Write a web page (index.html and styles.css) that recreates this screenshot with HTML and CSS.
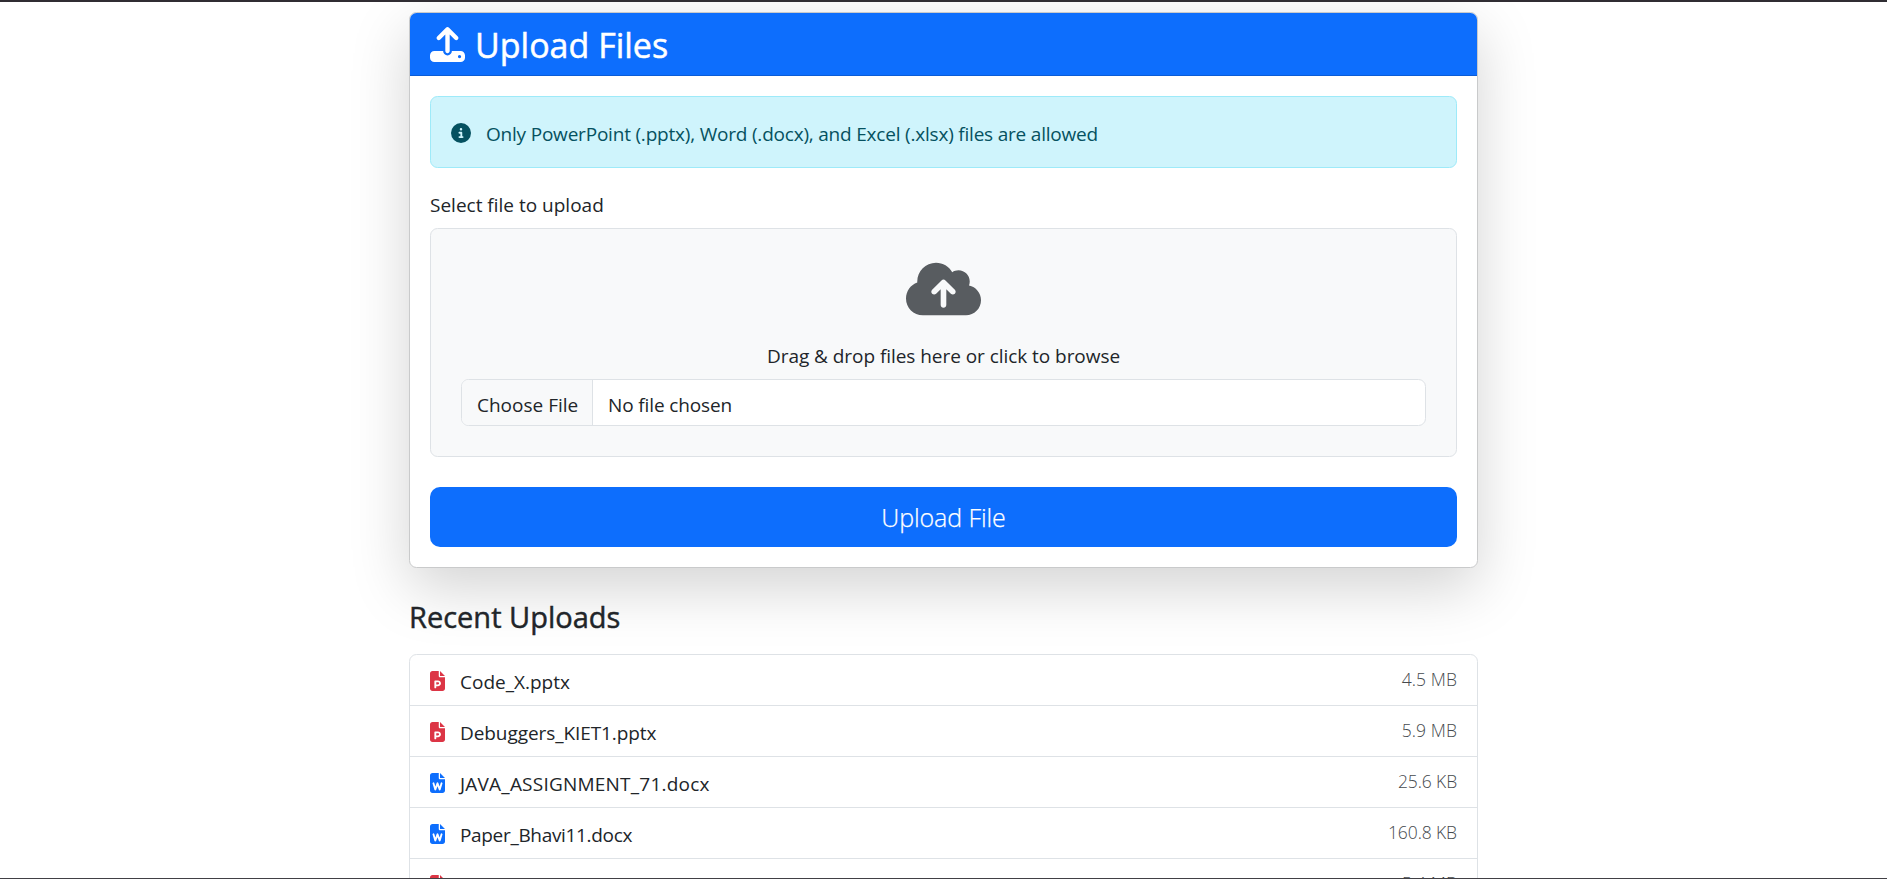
FILE: index.html
```html
<!DOCTYPE html>
<html lang="en">
<head>
<meta charset="utf-8">
<title>Upload Files</title>
<link rel="stylesheet" href="styles.css">
</head>
<body>
<svg class="defs" aria-hidden="true">
  <symbol id="ppt" viewBox="0 0 384 512"><path d="M64 0C28.7 0 0 28.7 0 64V448c0 35.3 28.7 64 64 64H320c35.3 0 64-28.7 64-64V160H256c-17.7 0-32-14.3-32-32V0H64zM256 0V128H384L256 0zM136 240h68c42 0 76 34 76 76s-34 76-76 76H160v32c0 13.3-10.7 24-24 24s-24-10.7-24-24V264c0-13.3 10.7-24 24-24zm68 104c15.5 0 28-12.5 28-28s-12.5-28-28-28H160v56h44z"/></symbol>
  <symbol id="word" viewBox="0 0 384 512"><path d="M64 0C28.7 0 0 28.7 0 64V448c0 35.3 28.7 64 64 64H320c35.3 0 64-28.7 64-64V160H256c-17.7 0-32-14.3-32-32V0H64zM256 0V128H384L256 0zM111 257.1l26.8 89.2 31.6-90.3c3.4-9.6 12.5-16.1 22.7-16.1s19.3 6.4 22.7 16.1l31.6 90.3L273 257.1c3.8-12.7 17.2-19.9 29.9-16.1s19.9 17.2 16.1 29.9l-48 160c-3 10-12 16.9-22.4 17.1s-19.8-6.2-23.2-16.1L192 336.6l-33.3 95.3c-3.4 9.8-12.8 16.3-23.2 16.1s-19.5-7.1-22.4-17.1l-48-160c-3.8-12.7 3.4-26.1 16.1-29.9s26.1 3.4 29.9 16.1z"/></symbol>
</svg>
<main class="container">
  <section class="card">
    <header class="card-header">
      <svg class="upload-icon" viewBox="0 0 512 512"><path d="M288 109.3V352c0 17.7-14.3 32-32 32s-32-14.3-32-32V109.3l-73.4 73.4c-12.5 12.5-32.8 12.5-45.3 0s-12.5-32.8 0-45.3l128-128c12.5-12.5 32.8-12.5 45.3 0l128 128c12.5 12.5 12.5 32.8 0 45.3s-32.8 12.5-45.3 0L288 109.3zM64 352H192c0 35.3 28.7 64 64 64s64-28.7 64-64H448c35.3 0 64 28.7 64 64v32c0 35.3-28.7 64-64 64H64c-35.3 0-64-28.7-64-64V416c0-35.3 28.7-64 64-64zM432 456a24 24 0 1 0 0-48 24 24 0 1 0 0 48z"/></svg>
      <h1 class="title">Upload Files</h1>
    </header>
    <div class="card-body">
      <div class="alert">
        <svg class="info-icon" viewBox="0 0 512 512"><path d="M256 512A256 256 0 1 0 256 0a256 256 0 1 0 0 512zM216 336h24V272H216c-13.3 0-24-10.7-24-24s10.7-24 24-24h48c13.3 0 24 10.7 24 24v88h8c13.3 0 24 10.7 24 24s-10.7 24-24 24H216c-13.3 0-24-10.7-24-24s10.7-24 24-24zm40-208a32 32 0 1 1 0 64 32 32 0 1 1 0-64z"/></svg>
        <span class="alert-text">Only PowerPoint (.pptx), Word (.docx), and Excel (.xlsx) files are allowed</span>
      </div>
      <div class="label">Select file to upload</div>
      <div class="dropzone">
        <svg class="cloud-icon" viewBox="0 0 640 512"><path d="M144 480C64.5 480 0 415.5 0 336c0-62.8 40.2-116.2 96.2-135.9c-.1-2.7-.2-5.4-.2-8.1c0-88.4 71.6-160 160-160c59.3 0 111 32.2 138.7 80.2C409.9 102 428.3 96 448 96c53 0 96 43 96 96c0 12.2-2.3 23.8-6.4 34.6C596 238.4 640 290.1 640 352c0 70.7-57.3 128-128 128H144zm79-217c-9.4 9.4-9.4 24.6 0 33.9s24.6 9.4 33.9 0l39-39V392c0 13.3 10.7 24 24 24s24-10.7 24-24V257.9l39 39c9.4 9.4 24.6 9.4 33.9 0s9.4-24.6 0-33.9l-80-80c-9.4-9.4-24.6-9.4-33.9 0l-80 80z"/></svg>
        <p class="hint">Drag &amp; drop files here or click to browse</p>
        <div class="file-input">
          <span class="choose">Choose File</span>
          <span class="chosen">No file chosen</span>
        </div>
      </div>
      <button class="submit" type="button">Upload File</button>
    </div>
  </section>
  <h2 class="recent">Recent Uploads</h2>
  <ul class="list">
    <li class="item"><svg class="file-icon red"><use href="#ppt"/></svg><span class="name">Code_X.pptx</span><span class="size">4.5 MB</span></li>
    <li class="item"><svg class="file-icon red"><use href="#ppt"/></svg><span class="name name-debuggers">Debuggers_KIET1.pptx</span><span class="size">5.9 MB</span></li>
    <li class="item"><svg class="file-icon blue"><use href="#word"/></svg><span class="name name-java">JAVA_ASSIGNMENT_71.docx</span><span class="size size-kb">25.6 KB</span></li>
    <li class="item"><svg class="file-icon blue"><use href="#word"/></svg><span class="name name-paper">Paper_Bhavi11.docx</span><span class="size size-kb">160.8 KB</span></li>
    <li class="item"><svg class="file-icon red"><use href="#ppt"/></svg><span class="name"></span><span class="size">5.4 MB</span></li>
  </ul>
</main>
</body>
</html>
```
FILE: styles.css
```css
* { box-sizing: border-box; }
html, body { height: 100%; }
body {
  margin: 0;
  height: 879px;
  overflow: hidden;
  border-top: 2px solid #302d33;
  border-bottom: 1px solid #414045;
  background: #fff;
  color: #212529;
  font: 400 19px/30px "Open Sans", "Noto Sans", sans-serif;
}
svg { fill: currentColor; flex: none; display: block; }
.defs { display: none; }
.container { width: 1069px; height: 876px; margin: 0 auto; padding-top: 10px; }
.card {
  height: 556px;
  background: #fff;
  border: 1px solid #c9cacb;
  border-radius: 7.5px;
  box-shadow: 0 20px 60px rgba(0, 0, 0, .175);
}
.card-header {
  display: flex;
  align-items: center;
  height: 63px;
  padding: 1px 20px 0;
  gap: 10px;
  background: #0d6efd;
  color: #fff;
  border-bottom: 1px solid #0b5cd6;
  border-radius: 6.5px 6.5px 0 0;
}
.upload-icon { width: 35px; height: 35px; }
.title { margin: 0; font-size: 34px; font-weight: 500; line-height: 42px; -webkit-text-stroke: .5px currentColor; }
.card-body { padding: 20px; }
.alert {
  display: flex;
  align-items: center;
  height: 72px;
  padding: 0 20px;
  gap: 15px;
  margin-bottom: 20px;
  background: #cff4fc;
  border: 1px solid #9eeaf9;
  border-radius: 7.5px;
  color: #055160;
}
.info-icon { width: 20px; height: 20px; margin-top: 2px; }
.alert-text { padding-top: 3px; letter-spacing: -.203px; }
.label { height: 30px; line-height: 35px; margin-bottom: 10px; }
.dropzone {
  height: 229px;
  padding: 30px 30px 0;
  background: #f8f9fa;
  border: 1px solid #dee2e6;
  border-radius: 7.5px;
}
.cloud-icon { width: 75px; height: 60px; margin: 0 auto 20px; color: #585c60; }
.hint { margin: 0 0 5px; text-align: center; line-height: 35px; letter-spacing: -.05px; }
.file-input {
  display: flex;
  height: 47px;
  line-height: 50px;
  background: #fff;
  border: 1px solid #dee2e6;
  border-radius: 7.5px;
  overflow: hidden;
}
.choose { padding: 0 15px; width: 131px; background: #f8f9fa; border-right: 1px solid #dee2e6; white-space: nowrap; }
.chosen { padding-left: 15px; letter-spacing: -.12px; }
.submit {
  display: block;
  width: 100%;
  height: 60px;
  margin-top: 30px;
  padding: 0;
  border: 0;
  border-radius: 10px;
  background: #0d6efd;
  color: #fff;
  font: 300 25px/60px "Open Sans", "Noto Sans", sans-serif;
  letter-spacing: -.08px;
  -webkit-text-stroke: .25px currentColor;
}
.recent { margin: 31px 0 19px; font-size: 29px; font-weight: 500; line-height: 36px; -webkit-text-stroke: .45px currentColor; }
.list {
  margin: 0;
  padding: 0;
  list-style: none;
  border: 1px solid #dee2e6;
  border-radius: 7.5px 7.5px 0 0;
  background: #fff;
}
.item { display: flex; align-items: center; height: 51px; padding: 0 20px; border-bottom: 1px solid #dee2e6; }
.file-icon { width: 15px; height: 20px; margin: 2px 15px 0 0; }
.red { color: #dc3545; }
.blue { color: #0d6efd; }
.name { flex: 1; padding-top: 3px; }
.name-debuggers { letter-spacing: -.08px; }
.name-java { letter-spacing: .22px; }
.name-paper { letter-spacing: -.33px; }
.size { padding-bottom: 2px; color: #45494d; font-size: 17.5px; font-weight: 300; line-height: 28px; letter-spacing: .1px; }
.size-kb { letter-spacing: -.1px; }
```
